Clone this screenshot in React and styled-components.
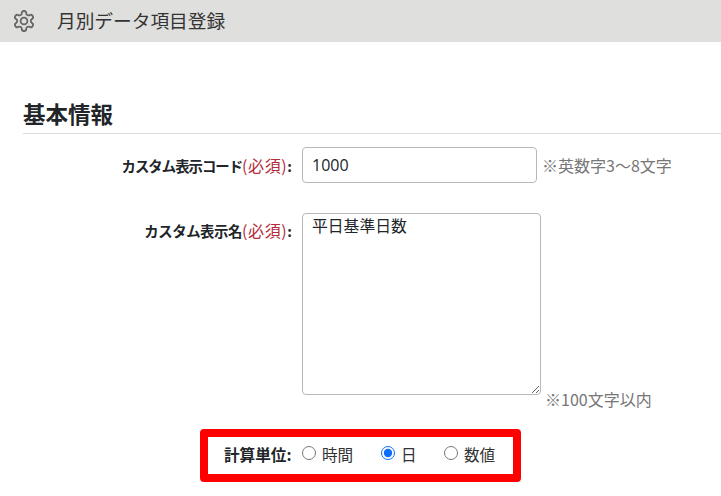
import React from "react";
import styled, { createGlobalStyle } from "styled-components";

const Global = createGlobalStyle`
  html, body { margin: 0; padding: 0; background: #fff; }
  body { width: 721px; height: 496px; overflow: hidden; font-family: "Open Sans", "Noto Sans CJK JP", sans-serif; color: #212529; }
`;
const Header = styled.header`
  height: 42px; background: #dfdfdd; display: flex; align-items: center; padding-left: 12px; gap: 21px; box-sizing: border-box;
`;
const Title = styled.h1`
  margin: 0 0 2px; font-size: 18.7px; font-weight: 400; color: #333; font-family: "Noto Sans CJK JP", sans-serif; line-height: 1;
`;
const Section = styled.h2`
  margin: 57px 0 0 23px; height: 35px; box-sizing: border-box; font-size: 22.5px; line-height: 28px; font-weight: 700; color: #212529; border-bottom: 1px solid #dcdcdc; font-family: "Noto Sans CJK JP", sans-serif;
`;
const Row = styled.div`
  display: flex; align-items: ${p => p.$top ? "flex-start" : "center"}; margin-top: ${p => p.$mt}px;
`;
const Label = styled.label`
  width: 292px; text-align: right; font-size: 14.4px; font-weight: 700; color: #212529; flex: none; font-family: "Noto Sans CJK JP", sans-serif;
  padding-top: ${p => p.$pt || 0}px;
`;
const Name = styled.span` letter-spacing: ${p => p.$ls}px; `;
const Req = styled.span` color: #b52d3c; font-weight: 400; font-size: 16px; letter-spacing: 0.6px; `;
const Input = styled.input`
  width: 235px; height: 36px; box-sizing: border-box; margin-left: 10px; padding: 0 9px; border: 1px solid #b8b8b8; border-radius: 4px; font-size: 16px; color: #212529; font-family: "Open Sans", sans-serif; outline: none;
`;
const Area = styled.textarea`
  width: 239px; height: 182px; box-sizing: border-box; margin-left: 10px; padding: 0 9px; border: 1px solid #b8b8b8; border-radius: 4px; font-size: 15.8px; line-height: 24px; color: #212529; font-family: "Noto Sans CJK JP", sans-serif; outline: none; resize: vertical; display: block;
`;
const Hint = styled.span`
  font-size: 16px; color: #777; margin-left: ${p => p.$end ? 4 : 5}px; font-family: "Noto Sans CJK JP", sans-serif; align-self: ${p => p.$end ? "flex-end" : "center"};
  margin-bottom: ${p => p.$end ? -14 : 0}px; line-height: 20px;
`;
const Marked = styled.div`
  box-sizing: border-box; width: 321px; height: 53px; margin: 34px 0 0 200px; border: 8px solid #f00; border-radius: 4px; display: flex; align-items: center; padding: 0 0 3px 16px; background: #fff;
`;
const UnitLabel = styled.span`
  font-size: 15.6px; font-weight: 700; color: #212529; font-family: "Noto Sans CJK JP", sans-serif; width: 78px; flex: none; white-space: nowrap;
`;
const Option = styled.label`
  display: flex; align-items: center; width: ${p => p.$w}px; flex: none; font-size: 15.6px; color: #333; font-family: "Noto Sans CJK JP", sans-serif;
`;
const Radio = styled.input`
  width: 14px; height: 14px; margin: 0 6px 2px 0; flex: none; accent-color: #0d6efd;
`;

const Gear = () => (
  <svg width="24" height="24" viewBox="0 0 24 24" fill="none" stroke="#666" strokeWidth="1.8" strokeLinecap="round" strokeLinejoin="round">
    <path d="M12.22 2h-.44a2 2 0 0 0-2 2v.18a2 2 0 0 1-1 1.73l-.43.25a2 2 0 0 1-2 0l-.15-.08a2 2 0 0 0-2.73.73l-.22.38a2 2 0 0 0 .73 2.73l.15.1a2 2 0 0 1 1 1.72v.51a2 2 0 0 1-1 1.74l-.15.09a2 2 0 0 0-.73 2.73l.22.38a2 2 0 0 0 2.73.73l.15-.08a2 2 0 0 1 2 0l.43.25a2 2 0 0 1 1 1.73V20a2 2 0 0 0 2 2h.44a2 2 0 0 0 2-2v-.18a2 2 0 0 1 1-1.73l.43-.25a2 2 0 0 1 2 0l.15.08a2 2 0 0 0 2.73-.73l.22-.39a2 2 0 0 0-.73-2.73l-.15-.08a2 2 0 0 1-1-1.74v-.5a2 2 0 0 1 1-1.74l.15-.09a2 2 0 0 0 .73-2.73l-.22-.38a2 2 0 0 0-2.73-.73l-.15.08a2 2 0 0 1-2 0l-.43-.25a2 2 0 0 1-1-1.73V4a2 2 0 0 0-2-2z" />
    <circle cx="12" cy="12" r="3.4" />
  </svg>
);

export default function App() {
  return (
    <>
      <Global />
      <Header>
        <Gear />
        <Title>月別データ項目登録</Title>
      </Header>
      <Section>基本情報</Section>
      <Row $mt={13}>
        <Label><Name $ls={-1}>カスタム表示コード</Name><Req>(必須)</Req>:</Label>
        <Input defaultValue="1000" />
        <Hint>※英数字3〜8文字</Hint>
      </Row>
      <Row $top $mt={30}>
        <Label $pt={5}><Name $ls={-0.4}>カスタム表示名</Name><Req>(必須)</Req>:</Label>
        <Area defaultValue="平日基準日数" />
        <Hint $end>※100文字以内</Hint>
      </Row>
      <Marked>
        <UnitLabel>計算単位:</UnitLabel>
        <Option $w={79}><Radio type="radio" name="u" />時間</Option>
        <Option $w={63}><Radio type="radio" name="u" defaultChecked />日</Option>
        <Option $w={60}><Radio type="radio" name="u" />数値</Option>
      </Marked>
    </>
  );
}
